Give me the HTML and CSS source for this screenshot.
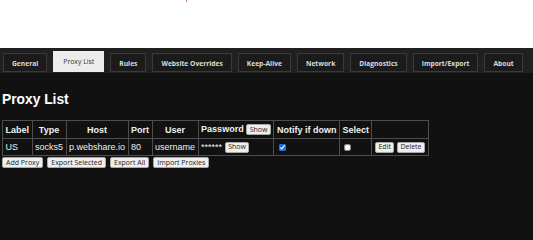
FILE: index.html
```html
<!DOCTYPE html>
<html lang="en">
<head>
<meta charset="utf-8">
<title>Proxy List</title>
<link rel="stylesheet" href="styles.css">
</head>
<body>
<div class="topbar"><span class="dot"></span></div>
<nav class="tabs">
  <button class="tab">General</button>
  <button class="tab active">Proxy List</button>
  <button class="tab">Rules</button>
  <button class="tab">Website Overrides</button>
  <button class="tab">Keep-Alive</button>
  <button class="tab">Network</button>
  <button class="tab">Diagnostics</button>
  <button class="tab">Import/Export</button>
  <button class="tab">About</button>
</nav>
<main class="content">
  <h2 class="title">Proxy List</h2>
  <table class="proxies">
    <thead>
      <tr>
        <th>Label</th>
        <th>Type</th>
        <th>Host</th>
        <th>Port</th>
        <th>User</th>
        <th>Password <button class="btn">Show</button></th>
        <th>Notify if down</th>
        <th>Select</th>
        <th></th>
      </tr>
    </thead>
    <tbody>
      <tr>
        <td>US</td>
        <td>socks5</td>
        <td>p.webshare.io</td>
        <td>80</td>
        <td>username</td>
        <td>****** <button class="btn">Show</button></td>
        <td><input class="check" type="checkbox" checked></td>
        <td><input class="check" type="checkbox"></td>
        <td><button class="btn">Edit</button> <button class="btn">Delete</button></td>
      </tr>
    </tbody>
  </table>
  <div class="actions">
    <button class="btn">Add Proxy</button>
    <button class="btn">Export Selected</button>
    <button class="btn">Export All</button>
    <button class="btn">Import Proxies</button>
  </div>
</main>
</body>
</html>
```
FILE: styles.css
```css
html, body {
  margin: 0;
  padding: 0;
  background: #111111;
  min-height: 100%;
}

body {
  font-family: "Liberation Sans", Arial, sans-serif;
  color: #f0f0f0;
}

.topbar {
  height: 48px;
  background: #ffffff;
  overflow: hidden;
}

.dot {
  display: block;
  width: 1px;
  height: 2px;
  margin-left: 186px;
  background: #e07a88;
}

.tabs {
  display: flex;
  align-items: flex-end;
  gap: 6px;
  padding: 3px 3px 1px;
  background: #202020;
}

.tab {
  font-family: "Open Sans", "Noto Sans", sans-serif;
  font-size: 6.7px;
  font-weight: 700;
  line-height: 9px;
  padding: 5px 8px 3px;
  margin: 0;
  border: 1px solid #3a3a3a;
  background: #1b1b1b;
  color: #dcdcdc;
  white-space: nowrap;
}

.tab.active {
  font-size: 6.9px;
  font-weight: 400;
  padding: 5px 9px 5px;
  border-color: #ececec;
  background: #ececec;
  color: #333333;
}

.content {
  padding: 0 2px;
}

.title {
  font-size: 13.8px;
  font-weight: bold;
  line-height: normal;
  margin: 19px 0 13px;
  color: #ffffff;
}

.proxies {
  border-collapse: collapse;
  font-size: 9px;
}

.proxies th,
.proxies td {
  border: 1px solid #4d4d4d;
  padding: 2.5px;
  line-height: normal;
  white-space: nowrap;
  vertical-align: middle;
}

.proxies th {
  padding: 3px 2.5px;
  font-weight: bold;
  text-align: center;
}

.proxies td {
  text-align: left;
}

.btn {
  font-family: "Open Sans", "Noto Sans", sans-serif;
  font-size: 7px;
  line-height: 8px;
  padding: 0.5px 2.5px;
  margin: 0;
  border: 1px solid #a8a8a8;
  border-radius: 2px;
  background: #efefef;
  color: #222222;
  vertical-align: middle;
}

.check {
  width: 7px;
  height: 7px;
  margin: 0 0 0 2px;
  vertical-align: middle;
  accent-color: #1a6fe0;
}

.actions {
  display: flex;
  gap: 4px;
  margin-top: 1px;
}

.actions .btn {
  padding: 0.5px 3px;
}
```
